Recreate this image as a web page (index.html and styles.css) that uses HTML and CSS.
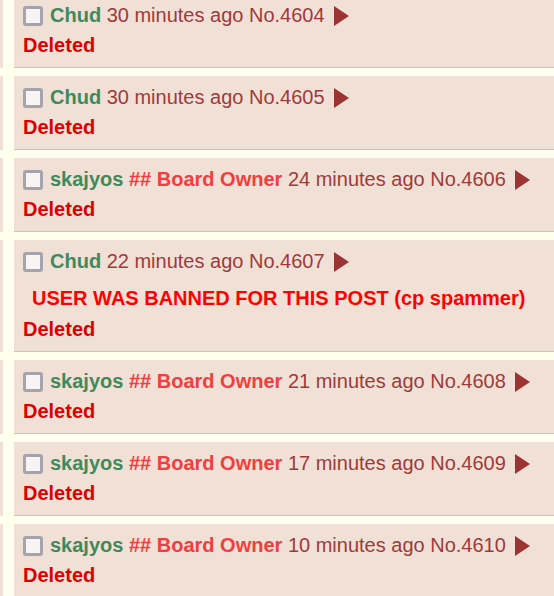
FILE: index.html
```html
<!DOCTYPE html>
<html lang="en">
<head>
  <meta charset="UTF-8">
  <meta name="viewport" content="width=device-width, initial-scale=1.0">
  <title>Thread</title>
  <link rel="stylesheet" href="styles.css">
</head>
<body>
  <div class="thread">

    <div class="reply-row">
      <div class="side"></div>
      <div class="post">
        <div class="post-info">
          <span class="check"></span><span class="name">Chud</span> <span class="meta">30 minutes ago No.4604</span><span class="arrow"></span>
        </div>
        <div class="deleted">Deleted</div>
      </div>
    </div>

    <div class="reply-row">
      <div class="side"></div>
      <div class="post">
        <div class="post-info">
          <span class="check"></span><span class="name">Chud</span> <span class="meta">30 minutes ago No.4605</span><span class="arrow"></span>
        </div>
        <div class="deleted">Deleted</div>
      </div>
    </div>

    <div class="reply-row">
      <div class="side"></div>
      <div class="post">
        <div class="post-info">
          <span class="check"></span><span class="name">skajyos</span> <span class="capcode">## Board Owner</span> <span class="meta">24 minutes ago No.4606</span><span class="arrow"></span>
        </div>
        <div class="deleted">Deleted</div>
      </div>
    </div>

    <div class="reply-row">
      <div class="side"></div>
      <div class="post">
        <div class="post-info">
          <span class="check"></span><span class="name">Chud</span> <span class="meta">22 minutes ago No.4607</span><span class="arrow"></span>
        </div>
        <div class="banned">USER WAS BANNED FOR THIS POST (cp spammer)</div>
        <div class="deleted">Deleted</div>
      </div>
    </div>

    <div class="reply-row">
      <div class="side"></div>
      <div class="post">
        <div class="post-info">
          <span class="check"></span><span class="name">skajyos</span> <span class="capcode">## Board Owner</span> <span class="meta">21 minutes ago No.4608</span><span class="arrow"></span>
        </div>
        <div class="deleted">Deleted</div>
      </div>
    </div>

    <div class="reply-row">
      <div class="side"></div>
      <div class="post">
        <div class="post-info">
          <span class="check"></span><span class="name">skajyos</span> <span class="capcode">## Board Owner</span> <span class="meta">17 minutes ago No.4609</span><span class="arrow"></span>
        </div>
        <div class="deleted">Deleted</div>
      </div>
    </div>

    <div class="reply-row">
      <div class="side"></div>
      <div class="post">
        <div class="post-info">
          <span class="check"></span><span class="name">skajyos</span> <span class="capcode">## Board Owner</span> <span class="meta">10 minutes ago No.4610</span><span class="arrow"></span>
        </div>
        <div class="deleted">Deleted</div>
      </div>
    </div>

  </div>
</body>
</html>
```

FILE: styles.css
```css
body {
  margin: 0;
  background-color: #ffffee;
  font-family: "Liberation Sans", Arial, sans-serif;
  font-size: 20px;
  overflow: hidden;
}

.thread {
  margin-top: -6px;
}

.reply-row {
  display: flex;
  margin-bottom: 8px;
}

.side {
  width: 3px;
  margin-right: 11px;
  background-color: #f0e0d6;
}

.post {
  flex: 1;
  background-color: #f0e0d6;
  border-bottom: 1px solid #d9bfb7;
  padding: 8px 0 9px 9px;
}

.post-info {
  line-height: 26px;
  white-space: nowrap;
}

.check {
  display: inline-block;
  width: 14px;
  height: 14px;
  border: 3px solid #a5a3ab;
  border-radius: 3px;
  background-color: #f8f4f3;
  vertical-align: middle;
  margin: -1px 7px 0 0;
}

.name {
  color: #3f8a5d;
  font-weight: bold;
}

.capcode {
  color: #f23e3e;
  font-weight: bold;
}

.meta {
  color: #9f3a3a;
}

.arrow {
  display: inline-block;
  width: 0;
  height: 0;
  border-left: 15px solid #9c3434;
  border-top: 10px solid transparent;
  border-bottom: 10px solid transparent;
  vertical-align: middle;
  margin: -1px 0 0 9px;
}

.banned {
  color: #ff0000;
  font-weight: bold;
  line-height: 27px;
  margin: 11px 0 0 9px;
}

.deleted {
  color: #dd0000;
  font-weight: bold;
  line-height: 26px;
  margin-top: 4px;
}
```
